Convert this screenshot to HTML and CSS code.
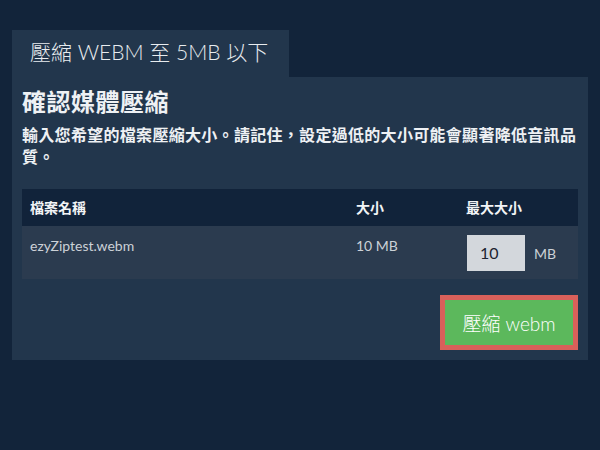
FILE: index.html
```html
<!DOCTYPE html>
<html lang="zh-Hant">
<head>
<meta charset="utf-8">
<link rel="stylesheet" href="styles.css">
</head>
<body>
<div class="wrap">
  <div class="tab">壓縮 WEBM 至 5MB 以下</div>
  <div class="panel">
    <h2 class="title">確認媒體壓縮</h2>
    <p class="desc">輸入您希望的檔案壓縮大小。請記住，設定過低的大小可能會顯著降低音訊品質。</p>
    <div class="table">
      <div class="thead">
        <div class="c1">檔案名稱</div>
        <div class="c2">大小</div>
        <div class="c3">最大大小</div>
      </div>
      <div class="trow">
        <div class="c1 cell">ezyZiptest.webm</div>
        <div class="c2 cell">10 MB</div>
        <div class="c3 cellin"><span class="input">10</span><span class="unit">MB</span></div>
      </div>
    </div>
    <div class="actions">
      <button class="btn">壓縮 webm</button>
    </div>
  </div>
</div>
</body>
</html>
```
FILE: styles.css
```css
* { box-sizing: border-box; }
html, body { margin: 0; padding: 0; }
body {
  background: #12243a;
  font-family: Lato, "Noto Sans CJK TC", sans-serif;
  color: #eef1f4;
  width: 600px;
  height: 450px;
}
.wrap { padding: 30px 12px 0 12px; }
.tab {
  display: inline-block;
  background: #22364c;
  height: 47px;
  padding: 0 21px 0 18px;
  font-size: 21px;
  line-height: 43px;
  color: #e8ecef;
  font-weight: 300;
}
.panel {
  background: #22364c;
  padding: 10px 10px 10px 10px;
  height: 283px;
}
.title {
  margin: 0;
  font-size: 24px;
  letter-spacing: 0.5px;
  line-height: 30px;
  font-weight: 700;
  color: #eef1f4;
}
.desc {
  margin: 7px 0 0 0;
  font-size: 16px;
  letter-spacing: 0.3px;
  line-height: 22px;
  font-weight: 700;
  color: #eef1f4;
}
.table { margin-top: 21px; }
.thead, .trow {
  display: grid;
  grid-template-columns: 326px 110px 120px;
}
.thead {
  background: #11233a;
  height: 37px;
  font-size: 14px;
  font-weight: 700;
  line-height: 37px;
  color: #f2f4f6;
}
.thead > div { padding-left: 8px; }
.trow {
  background: #2b3b4f;
  height: 53px;
  font-size: 14px;
  color: #ccd1d7;
}
.cell { padding: 10px 8px 0 8px; line-height: 20px; }
.cellin {
  padding: 9px 0 0 9px;
  display: flex;
  align-items: center;
  height: 45px;
}
.input {
  display: inline-block;
  width: 58px;
  height: 36px;
  background: #d3d7dc;
  color: #1c2430;
  font-size: 16px;
  line-height: 36px;
  padding-left: 13px;
}
.unit { margin-left: 9px; font-size: 14px; color: #ccd1d7; }
.actions {
  display: flex;
  justify-content: flex-end;
  margin-top: 16px;
}
.btn {
  font-family: Lato, "Noto Sans CJK TC", sans-serif;
  font-weight: 300;
  background: #5cb85c;
  border: 5px solid #d9605a;
  color: #ffffff;
  font-size: 19px;
  width: 138px;
  height: 55px;
  padding: 0;
  cursor: pointer;
}
```
